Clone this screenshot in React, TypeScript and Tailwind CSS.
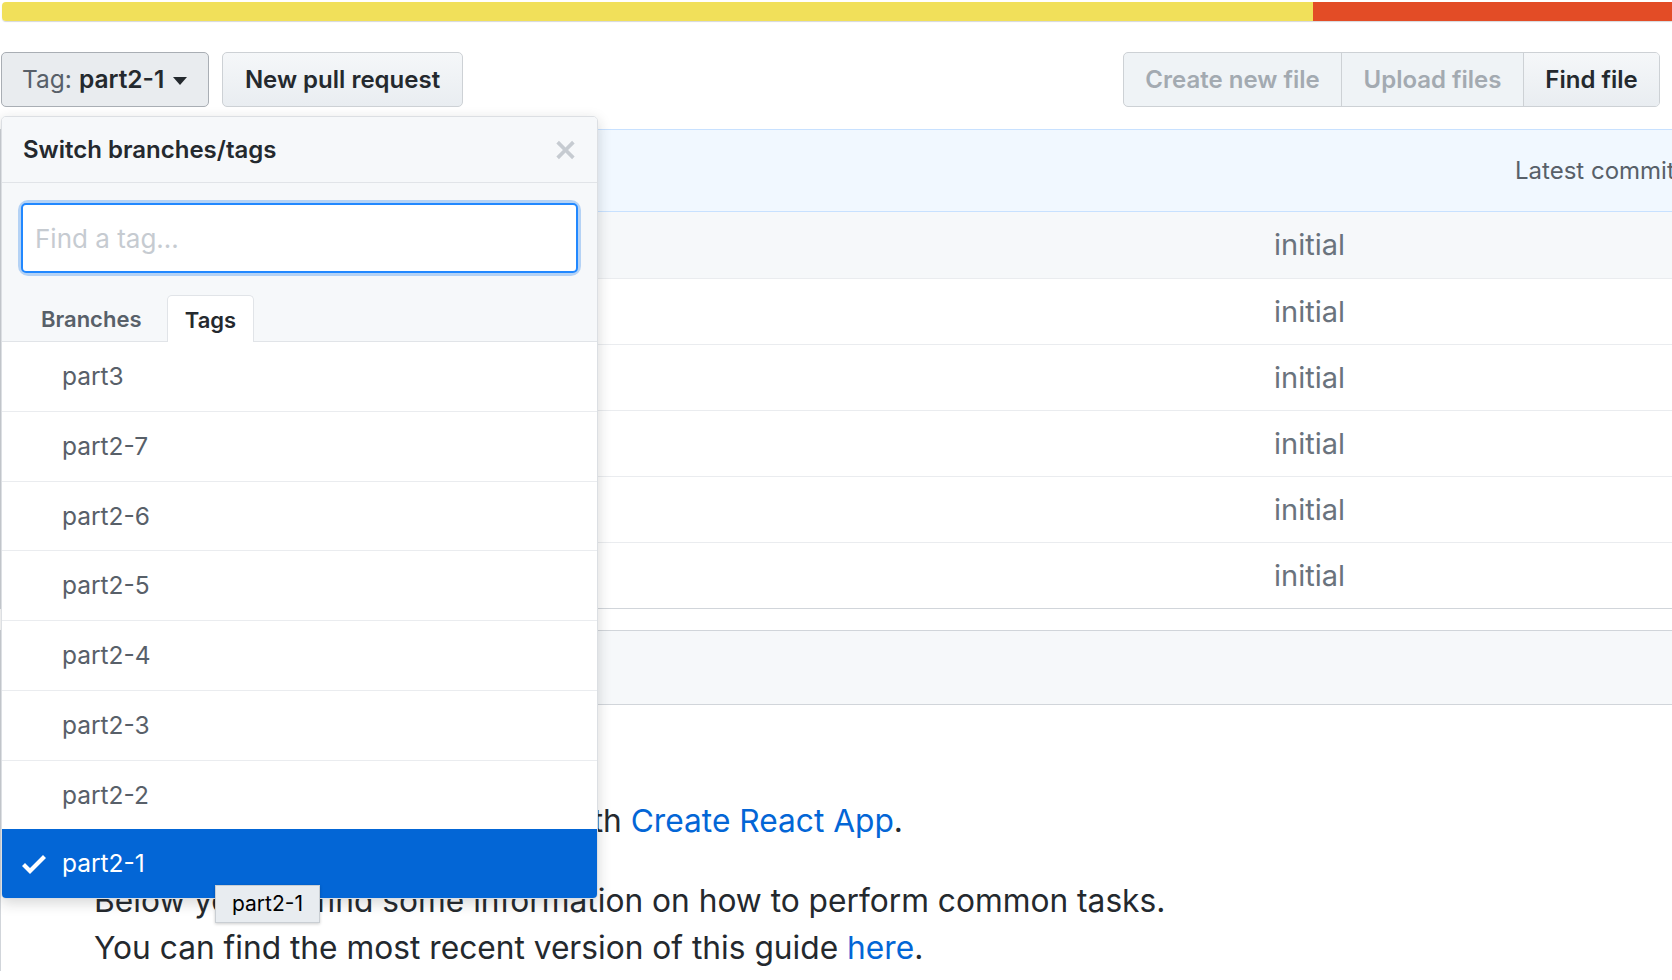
const tags = ["part3", "part2-7", "part2-6", "part2-5", "part2-4", "part2-3", "part2-2", "part2-1"];
const files = ["public", "src", ".gitignore", "README.md", "package-lock.json", "package.json"];

function Check() {
  return (
    <svg width="24" height="32" viewBox="0 0 12 16" fill="currentColor">
      <path fillRule="evenodd" d="M12 5l-8 8-4-4 1.5-1.5L4 10l6.5-6.5L12 5z" />
    </svg>
  );
}

function XIcon() {
  return (
    <svg width="21" height="28" viewBox="0 0 12 16" fill="currentColor">
      <path
        fillRule="evenodd"
        d="M7.48 8l3.75 3.75-1.48 1.48L6 9.48l-3.75 3.75-1.48-1.48L4.52 8 .77 4.25l1.48-1.48L6 6.52l3.75-3.75 1.48 1.48L7.48 8z"
      />
    </svg>
  );
}

function TagMenu() {
  return (
    <div className="absolute left-[1px] top-[116px] flex h-[783px] w-[597px] flex-col overflow-hidden rounded-[5px] border border-[#dcdfe3] bg-white shadow-[0_4px_14px_rgba(27,31,35,0.18)]">
      <div className="flex h-[66px] shrink-0 items-center justify-between border-b border-[#e1e4e8] bg-[#f6f8fa] pl-[21px] pr-[21px]">
        <span className="text-[24px] font-semibold">Switch branches/tags</span>
        <span className="text-[#c6cbd1]">
          <XIcon />
        </span>
      </div>
      <div className="shrink-0 bg-[#f6f8fa] pt-[20px]">
        <div className="mx-[19px] rounded-[7px] shadow-[0_0_0_3px_#b4d2f5]">
          <input
            readOnly
            placeholder="Find a tag..."
            className="block h-[70px] w-full rounded-[5px] border-2 border-[#2188ff] bg-white px-[12px] text-[26px] text-[#24292e] outline-none placeholder:text-[#c6cbd1]"
          />
        </div>
        <div className="mt-[22px] flex h-[47px] items-end border-b border-[#e1e4e8] pl-[20px]">
          <div className="flex h-[44px] w-[145px] items-center justify-start pl-[19px] text-[22px] font-semibold text-[#586069]">
            Branches
          </div>
          <div className="-mb-px flex h-[47px] w-[87px] items-center justify-center rounded-t-[5px] border-x border-t border-[#e1e4e8] bg-white pt-[2px] text-[22px] font-semibold text-[#24292e]">
            Tags
          </div>
        </div>
      </div>
      <div className="flex flex-1 flex-col">
        {tags.map((t, i) => {
          const sel = t === "part2-1";
          return (
            <div
              key={t}
              className={
                sel
                  ? "flex flex-1 items-center bg-[#0366d6] pl-[20px] text-white"
                  : "flex flex-1 items-center pl-[60px] text-[#586069] " + (i > 0 ? "border-t border-[#eaecef]" : "")
              }
            >
              {sel && (
                <span className="mr-[16px] flex">
                  <Check />
                </span>
              )}
              <span className="text-[24.5px]">{t}</span>
            </div>
          );
        })}
      </div>
    </div>
  );
}

export default function App() {
  return (
    <div className="relative h-[980px] w-[1672px] overflow-hidden bg-white font-[Inter,'Noto_Sans',sans-serif] text-[#24292e]">
      <div className="ml-[2px] mt-[2px] flex h-[19px] overflow-hidden rounded-l-[4px] shadow-[0_1px_1px_#d5d8db]">
        <div className="w-[1311px] bg-[#f1e05a]" />
        <div className="flex-1 bg-[#e34c26]" />
      </div>

      <div className="mt-[31px] flex h-[55px] pl-[1px] pr-[12px]">
        <button className="flex w-[208px] items-center rounded-[5px] border border-[#a9aeb4] bg-[#e9ecef] pl-[20px] text-[24.5px]">
          <span className="text-[#586069]">Tag:</span>
          <span className="ml-[7px] font-semibold">part2-1</span>
          <span className="ml-[9px] mt-[2px] h-0 w-0 border-x-[7px] border-t-[8px] border-x-transparent border-t-[#24292e]" />
        </button>
        <button className="ml-[13px] w-[241px] rounded-[5px] border border-[#cdd1d5] bg-gradient-to-b from-[#f5f7f9] to-[#e9edf1] text-[24px] font-semibold">
          New pull request
        </button>
        <div className="ml-auto flex overflow-hidden rounded-[5px] border border-[#cdd1d5] bg-[#eff3f6] text-[24px] font-semibold">
          <div className="flex w-[217px] items-center justify-center text-[#a3aab1]">Create new file</div>
          <div className="flex w-[182px] items-center justify-center border-l border-[#cdd1d5] text-[#a3aab1]">Upload files</div>
          <div className="flex w-[136px] items-center justify-center border-l border-[#cdd1d5] bg-gradient-to-b from-[#f5f7f9] to-[#e9edf1]">Find file</div>
        </div>
      </div>

      <div className="mt-[22px] w-[1760px] border-b border-l border-[#d1d5da]">
        <div className="grid h-[83px] grid-cols-[1514px_1fr] items-center border border-l-0 border-[#c8e1ff] bg-[#f1f8ff] text-[24px] text-[#586069]">
          <span className="pl-[90px] font-semibold text-[#24292e]">mluukkai</span>
          <span className="whitespace-nowrap">Latest commit 4d6e3a1 on 22 Nov 2017</span>
        </div>
        {files.map((f, i) => (
          <div
            key={f}
            className={
              "grid h-[66px] grid-cols-[1273px_1fr] items-center text-[29px] " +
              (i > 0 ? "border-t border-[#eaecef] " : "") +
              (i === 0 ? "bg-[#f6f8fa]" : "bg-white")
            }
          >
            <span className="pl-[90px] text-[24px] text-[#0366d6]">{f}</span>
            <span className="text-[#6a737d]">initial</span>
          </div>
        ))}
      </div>

      <div className="mt-[21px] w-[1760px] border-l border-[#d1d5da]">
        <div className="flex h-[75px] items-center border-y border-[#d1d5da] bg-[#f6f8fa] pl-[90px] text-[24px] font-semibold">
          README.md
        </div>
        <div className="pl-[93px] pt-[92px] text-[31.7px] leading-[47px]">
          <p>
            This project was bootstrapped with <span className="text-[#0366d6]">Create React App</span>.
          </p>
          <p className="mt-[33px]">
            Below you will find some information on how to perform common tasks.
            <br />
            You can find the most recent version of this guide <span className="text-[#0366d6]">here</span>.
          </p>
        </div>
      </div>

      <TagMenu />

      <div className="absolute left-[215px] top-[885px] flex h-[38px] w-[105px] items-center justify-center border border-[#c9ced3] bg-[#e8ecf0] text-[21px] text-black shadow-[0_1px_3px_rgba(0,0,0,0.2)]">
        part2-1
      </div>
    </div>
  );
}
